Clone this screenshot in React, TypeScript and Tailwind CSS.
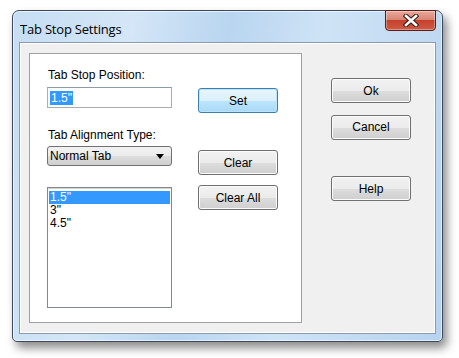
const font = "font-['Liberation_Sans',Arial,sans-serif]";

function WinButton({ label, primary }: { label: string; primary?: boolean }) {
  return (
    <button
      className={
        "w-[80px] h-[25px] rounded-[3px] border text-[12px] text-black " +
        font +
        (primary
          ? " border-[#3c7fb1] bg-[linear-gradient(#eaf6fd_0%,#d9f0fc_50%,#bee6fd_51%,#a7d9f5_100%)] shadow-[inset_0_0_0_1px_#b9e4fa]"
          : " border-[#707070] bg-[linear-gradient(#f2f2f2_0%,#ebebeb_50%,#dddddd_51%,#cfcfcf_100%)] shadow-[inset_0_0_0_1px_#fcfcfc]")
      }
    >
      {label}
    </button>
  );
}

function CloseButton() {
  return (
    <div className="w-[51px] h-[21px] -mt-px rounded-b-[4px] border border-[#5a1e14] flex items-center justify-center bg-[linear-gradient(#e9a99b_0%,#d98574_45%,#c4422c_50%,#cf5b44_100%)] shadow-[inset_0_0_0_1px_rgba(255,255,255,0.35)]">
      <svg width="16" height="13" viewBox="0 0 16 13">
        <path d="M3 2 L13 11 M13 2 L3 11" stroke="#3b1a14" strokeWidth="4.6" strokeLinecap="square" />
        <path d="M3 2 L13 11 M13 2 L3 11" stroke="#ffffff" strokeWidth="2.6" strokeLinecap="square" />
      </svg>
    </div>
  );
}

export default function App() {
  const stops = ['1.5"', '3"', '4.5"'];
  return (
    <div className={"w-[459px] h-[358px] bg-white pt-[10px] pl-[12px] " + font}>
      <div className="w-[431px] h-[332px] rounded-t-[7px] rounded-b-[5px] border border-[#3a4a5c] flex flex-col bg-[linear-gradient(100deg,#c6ddf3_0%,#d4e6f7_25%,#b9d5f0_45%,#cfe3f6_65%,#b7d3ef_100%)] shadow-[4px_6px_10px_rgba(0,0,0,0.45),inset_0_0_0_1px_rgba(255,255,255,0.6)]">
        <div className="h-[31px] flex items-start justify-between pl-[7px] pr-[6px]">
          <span className="mt-[9px] text-[13px] text-black font-['Open_Sans',sans-serif] tracking-[-0.2px]">Tab Stop Settings</span>
          <CloseButton />
        </div>
        <div className="flex-1 px-[6px] pb-[7px] flex">
          <div className="flex-1 border border-[#8a9bb0] bg-[#f0f0f0] pl-[9px] pt-[10px] flex shadow-[inset_0_0_0_1px_#ffffff]">
            <div className="w-[273px] h-[270px] bg-white border border-[#a0a0a0] flex pl-[17px] pt-[14px]">
              <div className="w-[125px] flex flex-col">
                <span className="text-[12px] text-black leading-[14px] ml-px">Tab Stop Position:</span>
                <div className="mt-[5px] h-[21px] border border-[#abadb3] border-t-[#8d9aa8] flex items-center pl-[2px]">
                  <span className="bg-[#3399ff] text-white text-[12px] leading-[14px] px-px">1.5"</span>
                </div>
                <span className="mt-[20px] text-[12px] text-black leading-[14px] ml-px">Tab Alignment Type:</span>
                <div className="mt-[4px] h-[20px] rounded-[3px] border border-[#707070] flex items-center justify-between pl-[2px] pr-[7px] bg-[linear-gradient(#f2f2f2_0%,#ebebeb_50%,#dddddd_51%,#cfcfcf_100%)]">
                  <span className="text-[12px] text-black leading-[14px]">Normal Tab</span>
                  <svg width="8" height="5" viewBox="0 0 8 5">
                    <path d="M0 0 H8 L4 5 Z" fill="#000" />
                  </svg>
                </div>
                <div className="mt-[21px] h-[121px] border border-[#828790] flex flex-col pt-[3px] px-px shadow-[inset_0_1px_0_#d8d4c8]">
                  {stops.map((s, i) => (
                    <div
                      key={s}
                      className={
                        "h-[13px] leading-[13px] text-[12px] pl-[1px] " +
                        (i === 0 ? "bg-[#3399ff] text-white" : "text-black")
                      }
                    >
                      {s}
                    </div>
                  ))}
                </div>
              </div>
              <div className="ml-[26px] pt-[20px] flex flex-col">
                <WinButton label="Set" primary />
                <div className="mt-[37px] flex flex-col gap-[10px]">
                  <WinButton label="Clear" />
                  <WinButton label="Clear All" />
                </div>
              </div>
            </div>
            <div className="ml-[29px] pt-[25px] flex flex-col">
              <WinButton label="Ok" />
              <div className="mt-[11px]">
                <WinButton label="Cancel" />
              </div>
              <div className="mt-[36px]">
                <WinButton label="Help" />
              </div>
            </div>
          </div>
        </div>
      </div>
    </div>
  );
}
